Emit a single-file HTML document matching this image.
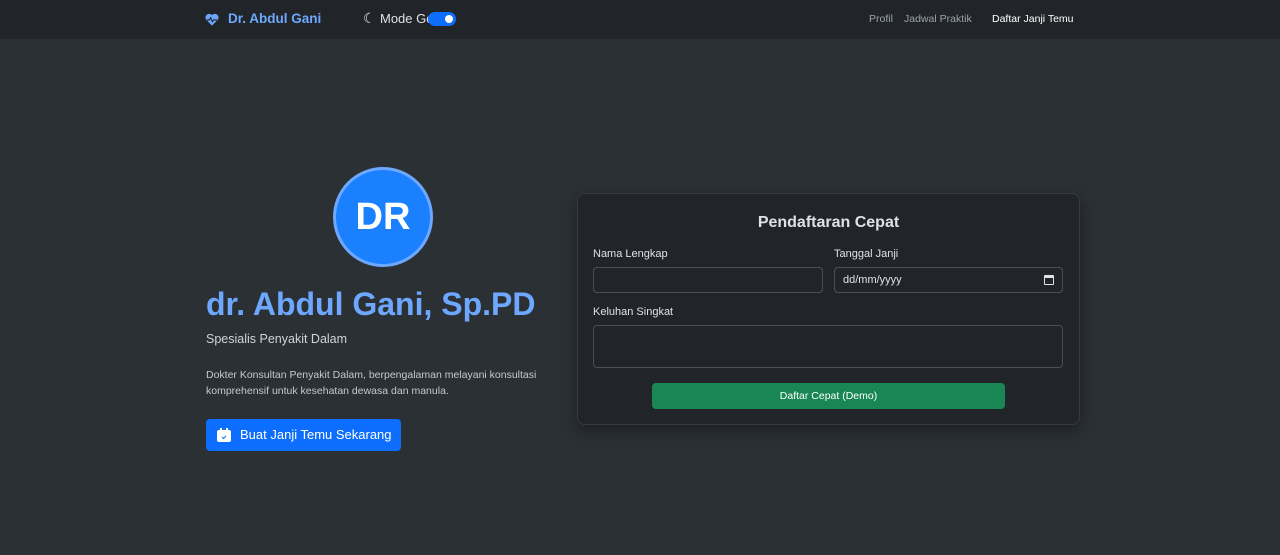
<!DOCTYPE html>
<html><head><meta charset="utf-8"><style>
*{box-sizing:border-box;margin:0;padding:0}
body{width:1280px;height:555px;background:#2b3035;font-family:"Liberation Sans",sans-serif;color:#dee2e6;position:relative;overflow:hidden}
.nav{position:absolute;top:0;left:0;width:1280px;height:39px;background:#212529}
.abs{position:absolute;white-space:nowrap}
.card{position:absolute;left:577px;top:193px;width:503px;height:232px;background:#212529;border:1px solid #373b3e;border-radius:8px;box-shadow:0 6px 16px rgba(0,0,0,.35)}
.inp{position:absolute;background:#212529;border:1px solid #495057;border-radius:4px}
.lbl{font-size:11px;color:#dee2e6}
</style></head><body>
<div class="nav">
<svg class="abs" style="left:205px;top:13px" width="14" height="13" viewBox="0 0 16 15"><path d="M8 14.5L1.5 8A4 4 0 0 1 8 2.5 4 4 0 0 1 14.5 8z" fill="#6ea8fe"/><path d="M2 8h3l1.5-2.5 2 4.5 1.5-2h4" stroke="#212529" stroke-width="1.3" fill="none"/></svg>
<div class="abs" style="left:228px;top:11px;font-size:13.5px;font-weight:bold;color:#6ea8fe">Dr. Abdul Gani</div>
<div class="abs" style="left:363px;top:10px;font-size:14px;color:#dee2e6">☾</div>
<div class="abs" style="left:380px;top:11px;font-size:13px;color:#dee2e6">Mode Ge</div>
<div class="abs" style="left:428px;top:12px;width:28px;height:14px;border-radius:7px;background:#0d6efd"><div style="position:absolute;right:3px;top:3px;width:8px;height:8px;border-radius:50%;background:#fff"></div></div>
<div class="abs" style="left:869px;top:13px;font-size:10.5px;color:#9ca3a9">Profil</div>
<div class="abs" style="left:904px;top:13px;font-size:10.5px;color:#9ca3a9">Jadwal Praktik</div>
<div class="abs" style="left:992px;top:13px;font-size:10.5px;color:#fff">Daftar Janji Temu</div>
</div>
<div class="abs" style="left:333px;top:167px;width:100px;height:100px;border-radius:50%;background:#1b80fd;border:3px solid #6ea8fe;color:#fff;font-size:38px;font-weight:bold;text-align:center;line-height:94px">DR</div>
<div class="abs" style="left:206px;top:286px;font-size:32px;font-weight:bold;color:#6ea8fe">dr. Abdul Gani, Sp.PD</div>
<div class="abs" style="left:206px;top:332px;font-size:12.5px;color:#ced4da">Spesialis Penyakit Dalam</div>
<div class="abs" style="left:206px;top:367px;font-size:10.5px;line-height:16px;color:#c5c9cd">Dokter Konsultan Penyakit Dalam, berpengalaman melayani konsultasi<br>komprehensif untuk kesehatan dewasa dan manula.</div>
<div class="abs" style="left:206px;top:419px;width:195px;height:32px;background:#0d6efd;border-radius:4px;color:#fff;font-size:13px;line-height:32px;padding-left:34px">Buat Janji Temu Sekarang
<svg style="position:absolute;left:11px;top:9px" width="14" height="14" viewBox="0 0 14 14"><rect x="0" y="2" width="14" height="12" rx="2" fill="#fff"/><rect x="3" y="0" width="2" height="3" fill="#fff"/><rect x="9" y="0" width="2" height="3" fill="#fff"/><path d="M5 9l1.5 1.5L9 8" stroke="#0d6efd" stroke-width="1" fill="none"/></svg></div>
<div class="card">
<div class="abs" style="left:0;width:501px;top:20px;text-align:center;font-size:16px;font-weight:bold;color:#dee2e6">Pendaftaran Cepat</div>
<div class="abs lbl" style="left:15px;top:54px">Nama Lengkap</div>
<div class="inp" style="left:15px;top:73px;width:230px;height:26px"></div>
<div class="abs lbl" style="left:256px;top:54px">Tanggal Janji</div>
<div class="inp" style="left:256px;top:73px;width:229px;height:26px"><span style="position:absolute;left:8px;top:6px;font-size:11px;color:#dee2e6">dd/mm/yyyy</span><span style="position:absolute;right:8px;top:7px;width:10px;height:10px;border:1.5px solid #dee2e6;border-top-width:3px;border-radius:1px"></span></div>
<div class="abs lbl" style="left:15px;top:112px">Keluhan Singkat</div>
<div class="inp" style="left:15px;top:131px;width:470px;height:43px"></div>
<div class="abs" style="left:74px;top:189px;width:353px;height:26px;background:#198754;border-radius:4px;color:#fff;font-size:10.5px;text-align:center;line-height:27px">Daftar Cepat (Demo)</div>
</div>
</body></html>
